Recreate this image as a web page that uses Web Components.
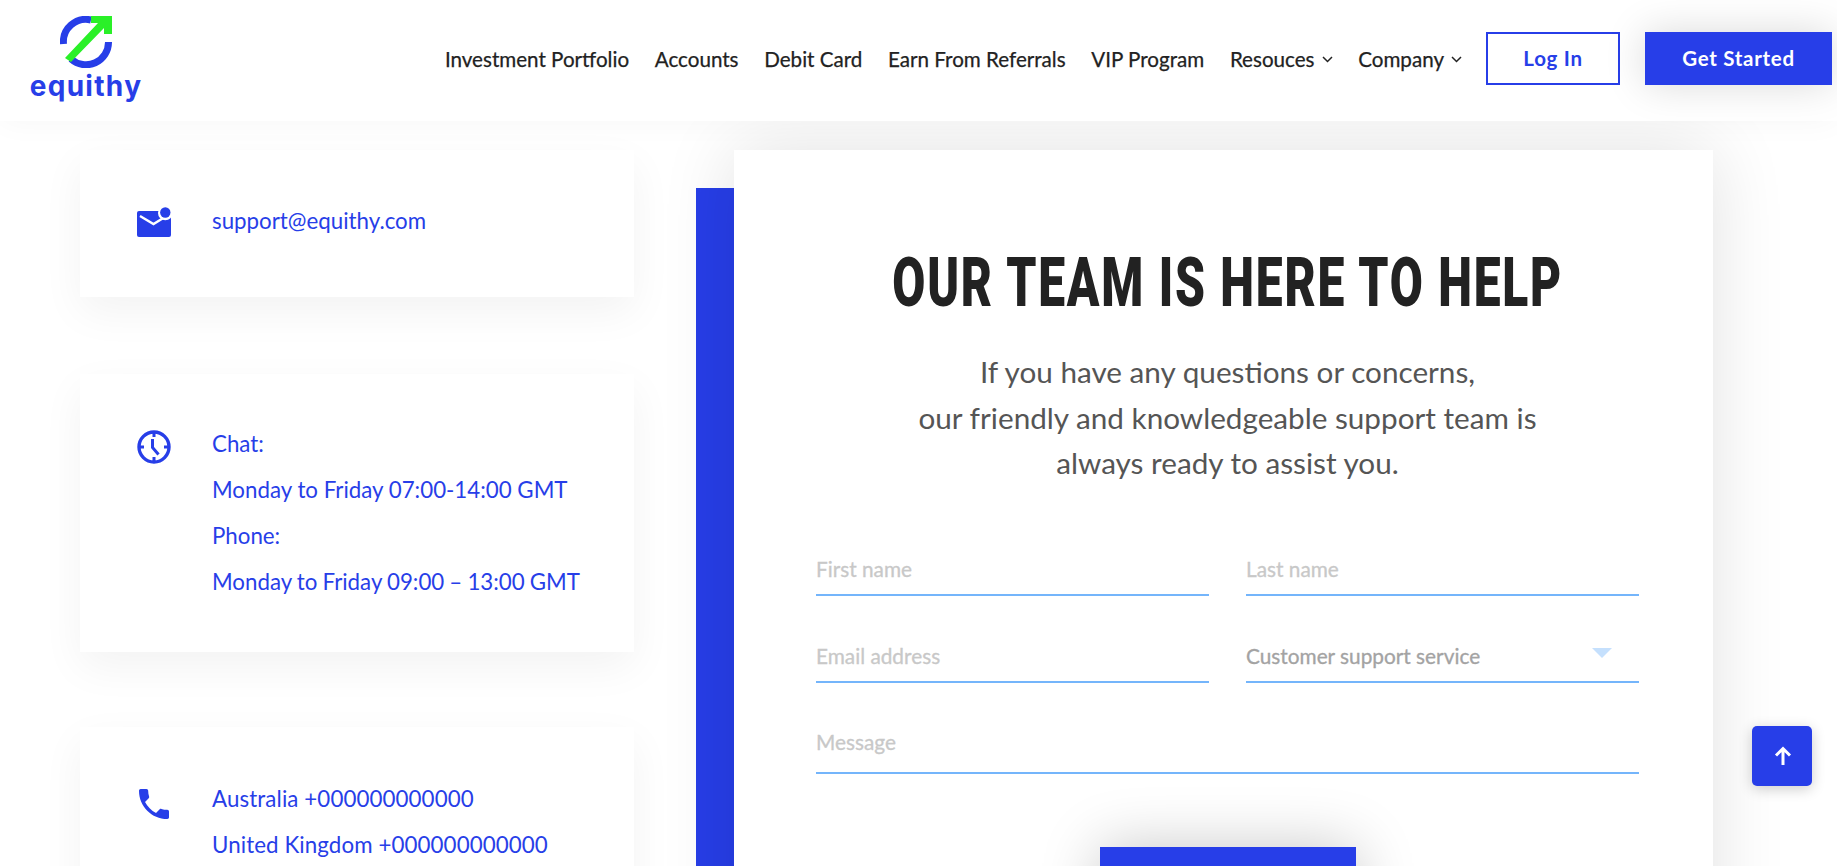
<!DOCTYPE html>
<html lang="en">
<head>
<meta charset="utf-8">
<title>Equithy - Contact</title>
<style>
html, body { margin: 0; height: 866px; overflow: hidden; background: #fff; }
body { font-family: Lato, "Liberation Sans", sans-serif; color: #222; }
.phones { letter-spacing: .1px; }
.dash { word-spacing: -.6px; }
</style>
</head>
<body>
<site-header></site-header>
<contact-page>
  <div slot="left">
    <info-card icon="mail" style="padding-top:48px;padding-bottom:53px"><div>support@equithy.com</div></info-card>
    <info-card icon="clock" style="padding-top:47px;padding-bottom:47px;margin-bottom:75px">
      <div>Chat:</div>
      <div>Monday to Friday 07:00-14:00 GMT</div>
      <div>Phone:</div>
      <div class="dash">Monday to Friday 09:00 – 13:00 GMT</div>
    </info-card>
    <info-card icon="phone" class="phones" style="padding-top:49px">
      <div>Australia +000000000000</div>
      <div>United Kingdom +000000000000</div>
    </info-card>
  </div>
  <contact-form slot="right"></contact-form>
</contact-page>
<back-top></back-top>

<script>
const BLUE = '#273ee8'
const chevron = `<svg width="11" height="7" viewBox="0 0 11 7"><path d="M1 1l4.500 4.500L10 1" fill="none" stroke="#222" stroke-width="1.500"/></svg>`

// header
class SiteHeader extends HTMLElement {
  constructor() {
    super()
    this.attachShadow({mode: 'open'})
    this.shadowRoot.innerHTML = `
    <style>
      :host { display: block; position: relative; z-index: 5; background: #fff; height: 121px; box-shadow: 0 0 30px rgba(0,0,0,.04); }
      .bar { display: flex; align-items: center; height: 100%; padding: 0 5px 0 31px; }
      .logo { display: flex; flex-direction: column; align-items: center; width: 110px; margin-top: -4px; }
      .logo svg { display: block; }
      .logo b { font: 700 28px/29px Inter, "Noto Sans", sans-serif; color: ${BLUE}; letter-spacing: 1.300px; margin-top: 4px; }
      nav { display: flex; align-items: center; gap: 25.700px; margin-left: auto; font: 400 20.600px/24px Lato, sans-serif; color: #222; -webkit-text-stroke: .25px #222; margin-top: -3px; }
      nav span { white-space: nowrap; display: flex; align-items: center; gap: 7px; }
      .btns { display: flex; gap: 25px; margin-left: 24px; margin-top: -4px; }
      .btn { box-sizing: border-box; height: 53px; padding-bottom: 2px; display: flex; align-items: center; justify-content: center; font: 700 20.500px Lato, sans-serif; letter-spacing: .7px; white-space: nowrap; }
      .login { width: 134px; border: 2px solid ${BLUE}; color: ${BLUE}; }
      .start { width: 187px; background: ${BLUE}; color: #fff; box-shadow: 0 0 40px rgba(0,0,0,.15); }
    </style>
    <div class="bar">
      <div class="logo">
        <svg width="52" height="52" viewBox="0 0 52 52">
          <path d="M31 4 A22.500 22.500 0 0 0 3.500 28" fill="none" stroke="${BLUE}" stroke-width="7"/>
          <path d="M48.500 26 A22.500 22.500 0 0 1 11 43" fill="none" stroke="${BLUE}" stroke-width="7"/>
          <path d="M31 0 H52 V18 H44 V12 L11 46 L5 42 L38 7 H31 Z" fill="#2af028"/>
        </svg>
        <b>equithy</b>
      </div>
      <nav>
        <span>Investment Portfolio</span>
        <span>Accounts</span>
        <span>Debit Card</span>
        <span>Earn From Referrals</span>
        <span>VIP Program</span>
        <span>Resouces ${chevron}</span>
        <span>Company ${chevron}</span>
      </nav>
      <div class="btns">
        <div class="btn login">Log In</div>
        <div class="btn start">Get Started</div>
      </div>
    </div>`
  }
}

// two columns under the header
class ContactPage extends HTMLElement {
  constructor() {
    super()
    this.attachShadow({mode: 'open'})
    this.shadowRoot.innerHTML = `
    <style>
      :host { display: grid; grid-template-columns: 554px 1017px; column-gap: 62px; padding: 29px 0 0 80px; }
    </style>
    <slot name="left"></slot>
    <slot name="right"></slot>`
  }
}

const ICONS = {
  mail: `<svg width="34" height="30" viewBox="0 0 34 30"><rect y="4" width="34" height="26" rx="2" fill="${BLUE}"/><path d="M3 9l13.500 8 9-5.500" fill="none" stroke="#fff" stroke-width="2.400"/><circle cx="28.300" cy="6" r="7.300" fill="#fff"/><circle cx="28.300" cy="5.500" r="5.200" fill="${BLUE}"/></svg>`,
  clock: `<svg width="34" height="34" viewBox="0 0 34 34"><circle cx="17" cy="17" r="15" fill="none" stroke="${BLUE}" stroke-width="3.400"/><path d="M17 3v4M17 27v4M3 17h4M27 17h4" stroke="${BLUE}" stroke-width="3"/><path d="M15.500 9v8.500l6 7" fill="none" stroke="${BLUE}" stroke-width="3"/></svg>`,
  phone: `<svg width="30" height="30" viewBox="3 3 18 18" style="margin:4px 0 0 2px"><path fill="${BLUE}" d="M6.620 10.790c1.440 2.830 3.760 5.140 6.590 6.590l2.200-2.200c.27-.27.67-.36 1.020-.24 1.120.37 2.330.57 3.570.57.550 0 1 .45 1 1V20c0 .55-.45 1-1 1-9.390 0-17-7.610-17-17 0-.55.45-1 1-1h3.500c.55 0 1 .45 1 1 0 1.250.2 2.450.57 3.570.11.35.03.74-.25 1.020l-2.200 2.200z"/></svg>`
}

// white card with icon on the left
class InfoCard extends HTMLElement {
  constructor() {
    super()
    this.attachShadow({mode: 'open'})
    this.shadowRoot.innerHTML = `
    <style>
      :host { display: block; background: #fff; box-shadow: 0 15px 40px rgba(0,0,0,.05); padding: 46px 30px 46px 57px; margin-bottom: 77px; font: 400 22.300px/46px Lato, sans-serif; color: ${BLUE}; }
      .row { display: flex; gap: 41px; }
      .ico { width: 34px; flex: none; padding-top: 9px; }
      svg { display: block; }
    </style>
    <div class="row">
      <div class="ico">${ICONS[this.getAttribute('icon')]}</div>
      <div><slot></slot></div>
    </div>`
  }
}

// underlined form field
class FormField extends HTMLElement {
  constructor() {
    super()
    this.attachShadow({mode: 'open'})
    const isSelect = this.hasAttribute('select')
    this.shadowRoot.innerHTML = `
    <style>
      :host { display: flex; align-items: flex-end; justify-content: space-between; box-sizing: border-box; height: 53px; border-bottom: 2px solid #74b5fb; font: 400 20.800px/24px Lato, sans-serif; -webkit-text-stroke: .3px currentColor; color: #c8c8c8; padding: 0 0 13px; }
      :host([select]) { color: #a3a3a3; }
      i { width: 0; height: 0; border: 10px solid transparent; border-top: 10px solid #c5e0fd; border-bottom: 0; margin: 0 27px 10px 0; }
    </style>
    <slot></slot>${isSelect ? '<i></i>' : ''}`
  }
}

// the big panel with the blue strip beside it
class ContactForm extends HTMLElement {
  constructor() {
    super()
    this.attachShadow({mode: 'open'})
    this.shadowRoot.innerHTML = `
    <style>
      :host { display: grid; grid-template-columns: 38px 979px; height: 800px; }
      .strip { background: ${BLUE}; margin-top: 38px; }
      .panel { position: relative; background: #fff; box-shadow: 0 0 70px rgba(0,0,0,.12); padding: 95px 74px 0 82px; text-align: center; }
      h2 { display: flex; justify-content: center; margin: 0; font: 900 68px/76px Roboto, "Liberation Sans", sans-serif; letter-spacing: 2.500px; color: #222; }
      h2 span { flex: none; white-space: nowrap; transform: scaleX(.705); }
      p { margin: 28px 0 0; font: 400 29.700px/45.500px Lato, sans-serif; color: #555; }
      .grid { display: grid; grid-template-columns: 393px 393px; column-gap: 37px; row-gap: 34px; margin-top: 57px; text-align: left; }
      .wide { grid-column: 1 / 3; height: 57px; padding-bottom: 18px; }
      .send { display: block; width: 256px; height: 100px; margin: 73px auto 0; background: ${BLUE}; box-shadow: 0 0 60px rgba(0,0,0,.22); }
    </style>
    <div class="strip"></div>
    <div class="panel">
      <h2><span>OUR TEAM IS HERE TO HELP</span></h2>
      <p>If you have any questions or concerns,<br>our friendly and knowledgeable support team is<br>always ready to assist you.</p>
      <div class="grid">
        <form-field>First name</form-field>
        <form-field>Last name</form-field>
        <form-field>Email address</form-field>
        <form-field select>Customer support service</form-field>
        <form-field class="wide">Message</form-field>
      </div>
      <div class="send"></div>
    </div>`
  }
}

// back to top button, floats over the page
class BackTop extends HTMLElement {
  constructor() {
    super()
    this.attachShadow({mode: 'open'})
    this.shadowRoot.innerHTML = `
    <style>
      :host { position: fixed; left: 1752px; top: 726px; width: 60px; height: 60px; background: ${BLUE}; border-radius: 5px; box-shadow: 0 3px 14px rgba(0,0,0,.2); display: flex; align-items: center; justify-content: center; z-index: 6; }
    </style>
    <svg width="20" height="20" viewBox="0 0 20 20" style="margin-left:2px"><path d="M10 19V2.500M3 9.500L10 2.500l7 7" fill="none" stroke="#fff" stroke-width="3"/></svg>`
  }
}

customElements.define('site-header', SiteHeader)
customElements.define('contact-page', ContactPage)
customElements.define('info-card', InfoCard)
customElements.define('form-field', FormField)
customElements.define('contact-form', ContactForm)
customElements.define('back-top', BackTop)
</script>
</body>
</html>
